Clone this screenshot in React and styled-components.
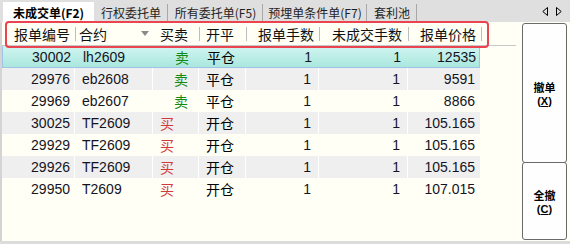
import React from 'react';
import styled, { createGlobalStyle, css } from 'styled-components';

const GlobalStyle = createGlobalStyle`
  html, body {
    margin: 0;
    padding: 0;
    background: #fffff6;
  }
  * {
    box-sizing: border-box;
  }
`;

const COLS = '72px 77px 45px 46px 72px 88px 72px';

const Window = styled.div`
  position: relative;
  width: 570px;
  height: 244px;
  overflow: hidden;
  background: #fffff6;
  font-family: "Liberation Sans", "Noto Sans CJK SC", sans-serif;
  display: flex;
  flex-direction: column;
`;

const TabBar = styled.div`
  height: 22px;
  flex: 0 0 22px;
  background: #dfdfdf;
  display: flex;
  align-items: flex-end;
  padding-left: 3px;
  font-family: "Noto Sans CJK SC", "Liberation Sans", sans-serif;
  font-size: 12px;
  color: #1e1e1e;
`;

const Tab = styled.div`
  height: 20px;
  width: ${p => p.$w}px;
  display: flex;
  align-items: center;
  justify-content: center;
  position: relative;
  ${p => p.$active ? css`
    background: #ffffff;
    font-weight: bold;
    color: #000;
  ` : css`
    &::after {
      content: '';
      position: absolute;
      right: 0;
      top: 2px;
      bottom: 0;
      width: 1px;
      background: #a8a8a8;
    }
  `}
`;

const TabArrows = styled.div`
  margin-left: auto;
  margin-right: 8px;
  height: 22px;
  display: flex;
  align-items: center;
  gap: 8px;
`;

const Body = styled.div`
  flex: 1;
  display: flex;
  border-left: 2px solid #d4d4d4;
`;

const TableArea = styled.div`
  width: 516px;
  display: flex;
  flex-direction: column;
`;

const HeaderRow = styled.div`
  height: 24px;
  display: grid;
  grid-template-columns: ${COLS};
  column-gap: 1px;
  border-bottom: 1px solid #c8c8c8;
  font-family: "Noto Sans CJK SC", "Liberation Sans", sans-serif;
  font-size: 14px;
  color: #111;
`;

const HeaderCell = styled.div`
  position: relative;
  display: flex;
  align-items: center;
  justify-content: space-between;
  padding-left: ${p => p.$pl}px;
  padding-right: 2px;
  white-space: nowrap;
  &::after {
    content: '';
    display: ${p => (p.$noSep ? 'none' : 'block')};
    position: absolute;
    right: -2px;
    top: 5px;
    height: 14px;
    width: 1px;
    background: #bdbdbd;
  }
`;

const DropArrow = styled.span`
  width: 0;
  height: 0;
  border-left: 4px solid transparent;
  border-right: 4px solid transparent;
  border-top: 5px solid #8a8a8a;
  margin-right: 1px;
`;

const Row = styled.div`
  height: 22px;
  display: grid;
  grid-template-columns: ${COLS};
  column-gap: 1px;
  width: 478px;
  font-size: 14px;
  color: #141424;
  ${p => p.$variant === 'selected' && css`
    background: linear-gradient(#d2f5f1, #a9e7dd);
    border: 1px solid #9fc4e8;
    border-top: none;
  `}
  ${p => p.$variant === 'gray' && css`
    background: #ffffff;
    & > div { background: #efefef; }
  `}
`;

const Cell = styled.div`
  display: flex;
  align-items: center;
  white-space: nowrap;
  justify-content: ${p => (p.$right ? 'flex-end' : 'flex-start')};
  padding-left: ${p => p.$pl || 0}px;
  padding-right: ${p => p.$pr || 0}px;
`;

const CnCell = styled(Cell)`
  font-family: "Noto Sans CJK SC", sans-serif;
  font-size: 14px;
  color: ${p => p.$color || '#000'};
`;

const ButtonPanel = styled.div`
  flex: 1;
  display: flex;
  flex-direction: column;
  padding: 1px 3px 0 6px;
`;

const ActionButton = styled.button`
  height: ${p => p.$h}px;
  width: 45px;
  background: #fefefe;
  border: 1px solid #6a6a6a;
  border-radius: 3px;
  margin-top: ${p => p.$mt || 0}px;
  padding: 0;
  display: flex;
  flex-direction: column;
  align-items: center;
  justify-content: center;
  gap: 1px;
  font-weight: bold;
  font-size: 11px;
  line-height: 14px;
  color: #000;
`;

const ButtonLabel = styled.span`
  font-family: "Noto Sans CJK SC", sans-serif;
`;

const ButtonKey = styled.span`
  font-family: "Liberation Sans", sans-serif;
  line-height: 12px;
`;

const BottomStrip = styled.div`
  height: 3px;
  flex: 0 0 3px;
  background: #dcdcdc;
`;

const Annotation = styled.div`
  position: absolute;
  left: 5px;
  top: 21px;
  width: 484px;
  height: 27px;
  border: 2px solid #ea4450;
  border-radius: 4px;
  pointer-events: none;
`;

const tabs = [
  { label: '未成交单(F2)', w: 91, active: true },
  { label: '行权委托单', w: 74 },
  { label: '所有委托单(F5)', w: 95 },
  { label: '预埋单条件单(F7)', w: 104 },
  { label: '套利池', w: 50 },
];

const orders = [
  ['30002', 'lh2609', '卖', '平仓', '1', '1', '12535'],
  ['29976', 'eb2608', '卖', '平仓', '1', '1', '9591'],
  ['29969', 'eb2607', '卖', '平仓', '1', '1', '8866'],
  ['30025', 'TF2609', '买', '开仓', '1', '1', '105.165'],
  ['29929', 'TF2609', '买', '开仓', '1', '1', '105.165'],
  ['29926', 'TF2609', '买', '开仓', '1', '1', '105.165'],
  ['29950', 'T2609', '买', '开仓', '1', '1', '107.015'],
];

const Arrow = ({ dir }) => (
  <svg width="6" height="9" viewBox="0 0 6 9">
    {dir === 'left'
      ? <path d="M5.5 0.5 L0.8 4.5 L5.5 8.5 Z" fill="none" stroke="#000" strokeWidth="1" />
      : <path d="M0.5 0.5 L5.2 4.5 L0.5 8.5 Z" fill="none" stroke="#000" strokeWidth="1" />}
  </svg>
);

export default function App() {
  return (
    <>
      <GlobalStyle />
      <Window>
        <TabBar>
          {tabs.map(t => (
            <Tab key={t.label} $w={t.w} $active={t.active}>{t.label}</Tab>
          ))}
          <TabArrows>
            <Arrow dir="left" />
            <Arrow dir="right" />
          </TabArrows>
        </TabBar>
        <Body>
          <TableArea>
            <HeaderRow>
              <HeaderCell $pl={12}>报单编号</HeaderCell>
              <HeaderCell $pl={4} $noSep>合约<DropArrow /></HeaderCell>
              <HeaderCell $pl={7}>买卖</HeaderCell>
              <HeaderCell $pl={7}>开平</HeaderCell>
              <HeaderCell $pl={12}>报单手数</HeaderCell>
              <HeaderCell $pl={13}>未成交手数</HeaderCell>
              <HeaderCell $pl={12}>报单价格</HeaderCell>
            </HeaderRow>
            {orders.map((o, i) => {
              const variant = i === 0 ? 'selected' : i % 2 === 1 ? 'gray' : 'cream';
              const sell = o[2] === '卖';
              return (
                <Row key={o[0]} $variant={variant}>
                  <Cell $right $pr={4}>{o[0]}</Cell>
                  <Cell $pl={7}>{o[1]}</Cell>
                  <CnCell $pl={sell ? 21 : 7} $color={sell ? '#108a10' : '#d23a3a'}>{o[2]}</CnCell>
                  <CnCell $pl={7}>{o[3]}</CnCell>
                  <Cell $right $pr={7}>{o[4]}</Cell>
                  <Cell $right $pr={7}>{o[5]}</Cell>
                  <Cell $right $pr={5}>{o[6]}</Cell>
                </Row>
              );
            })}
          </TableArea>
          <ButtonPanel>
            <ActionButton $h={140}>
              <ButtonLabel>撤单</ButtonLabel>
              <ButtonKey>(<u>X</u>)</ButtonKey>
            </ActionButton>
            <ActionButton $h={78} $mt={-1}>
              <ButtonLabel>全撤</ButtonLabel>
              <ButtonKey>(<u>C</u>)</ButtonKey>
            </ActionButton>
          </ButtonPanel>
        </Body>
        <BottomStrip />
        <Annotation />
      </Window>
    </>
  );
}
